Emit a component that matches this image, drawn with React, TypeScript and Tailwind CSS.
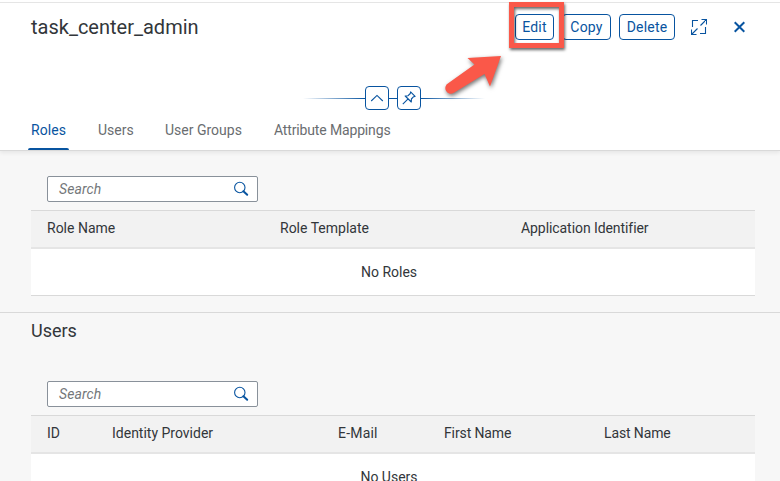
import React from "react";

const tabs = [
  { label: "Roles", cls: "w-[67px] text-[#0854a0] tracking-[0.1px]" },
  { label: "Users", cls: "w-[67px] text-[#6a6d70]" },
  { label: "User Groups", cls: "w-[109px] text-[#6a6d70]" },
  { label: "Attribute Mappings", cls: "w-[140px] text-[#6a6d70] tracking-[-0.15px]" },
];

function ToolButton({ label, cls }: { label: string; cls: string }) {
  return (
    <button
      className={`flex h-[26px] items-center justify-center rounded-[4px] border border-[#0854a0] bg-white text-[14px] leading-none tracking-[0.2px] text-[#0854a0] ${cls}`}
    >
      {label}
    </button>
  );
}

function SearchField() {
  return (
    <div className="ml-4 flex h-[26px] w-[211px] items-center justify-between rounded-[2px] border border-[#89919a] bg-white pr-[8px] pl-[11px]">
      <span className="text-[14px] leading-none tracking-[0.1px] text-[#74777a] italic">Search</span>
      <svg width="16" height="16" viewBox="0 0 16 16" fill="none" stroke="#0854a0">
        <circle cx="6.8" cy="6.5" r="5.2" strokeWidth="1.1" />
        <path d="M10.4 10.2 L14.2 13.8" strokeWidth="2" strokeLinecap="round" />
      </svg>
    </div>
  );
}

type Column = { label: string; cls: string };

function DataTable({ columns, empty }: { columns: Column[]; empty: string }) {
  return (
    <div className="mt-2 h-[86px] w-[724px] border-y border-[#d9d9d9] bg-white">
      <div className="flex h-[38px] items-center border-b-2 border-[#e5e5e5] bg-[#f2f2f2] pb-[2px] pl-4">
        {columns.map((c) => (
          <span key={c.label} className={`shrink-0 whitespace-nowrap ${c.cls}`}>
            {c.label}
          </span>
        ))}
      </div>
      <div className="flex h-[46px] items-center justify-center pr-2">{empty}</div>
    </div>
  );
}

export default function App() {
  return (
    <div className="relative h-[481px] w-[780px] overflow-hidden bg-[#f7f7f7] font-['Roboto',sans-serif] text-[14px] leading-none tracking-[0px] text-[#32363a]">
      <header className="relative h-[151px] border-b border-[#d9d9d9] bg-white pt-[2px] shadow-[0_2px_4px_rgba(0,0,0,0.07)]">
        <div className="flex h-[49px] items-center border-t border-[#e5e5e5] pr-[35px] pl-[31px]">
          <h1 className="flex-1 text-[20px] leading-none tracking-[0px]">task_center_admin</h1>
          <ToolButton label="Edit" cls="mr-2 w-[39px]" />
          <ToolButton label="Copy" cls="mr-2 w-[49px]" />
          <ToolButton label="Delete" cls="mr-4 w-[56px]" />
          <svg className="mr-[27px]" width="16" height="16" viewBox="0 0 16 16" fill="none" stroke="#0854a0" strokeWidth="1.1">
            <path d="M7 1.5H1.5V8M9 14.5H14.5V8M10.5.5H15.5V5.5M15.5.5L9.5 6.5M.5 10.5V15.5H5.5M.5 15.5L6.5 9.5" />
          </svg>
          <svg width="11" height="12" viewBox="0 0 11 12" fill="none" stroke="#0854a0" strokeWidth="2">
            <path d="M.7 1.2L10.3 10.8M10.3 1.2L.7 10.8" />
          </svg>
        </div>
        <div className="mt-[35px] ml-[303px] flex h-6 w-[182px] items-center">
          <div className="h-px w-[62px] bg-gradient-to-r from-transparent to-[#0854a0]" />
          <div className="flex h-6 w-6 items-center justify-center rounded-[4px] border border-[#0854a0]">
            <svg width="14" height="8" viewBox="0 0 14 8" fill="none" stroke="#0854a0" strokeWidth="1.1">
              <path d="M1.2 7L7 1.4L12.8 7" />
            </svg>
          </div>
          <div className="h-px w-2 bg-[#0854a0]" />
          <div className="flex h-6 w-6 items-center justify-center rounded-[4px] border border-[#0854a0]">
            <svg width="14" height="14" viewBox="0 0 14 14" fill="none" stroke="#0854a0" strokeWidth="1.1" strokeLinejoin="round">
              <path d="M8.6.9L13.1 5.4L11.6 5.7L9.4 8L9.3 11L3.2 5L6.1 4.7L8.3 2.5ZM6.1 7.9L.8 13.2" />
            </svg>
          </div>
          <div className="h-px flex-1 bg-gradient-to-r from-[#0854a0] to-transparent" />
        </div>
        <nav className="flex h-10 pl-[31px]">
          {tabs.map((t, i) => (
            <div key={t.label} className={`relative flex h-10 items-center whitespace-nowrap ${t.cls}`}>
              {t.label}
              {i === 0 && <i className="absolute bottom-0 left-[-3px] h-[2px] w-[41px] rounded-t-[2px] bg-[#0854a0]" />}
            </div>
          ))}
        </nav>
      </header>

      <section className="h-[161px] pt-[25px] pl-[31px]">
        <SearchField />
        <DataTable
          columns={[
            { label: "Role Name", cls: "w-[233px]" },
            { label: "Role Template", cls: "w-[241px]" },
            { label: "Application Identifier", cls: "w-[200px] tracking-[-0.07px]" },
          ]}
          empty="No Roles"
        />
      </section>

      <section className="border-t border-[#d9d9d9] pl-[31px]">
        <h2 className="flex h-[68px] pt-[9px] text-[18px] leading-none">Users</h2>
        <SearchField />
        <DataTable
          columns={[
            { label: "ID", cls: "w-[65px]" },
            { label: "Identity Provider", cls: "w-[226px]" },
            { label: "E-Mail", cls: "w-[106px] tracking-[0.2px]" },
            { label: "First Name", cls: "w-[160px] tracking-[-0.12px]" },
            { label: "Last Name", cls: "w-[100px] tracking-[-0.12px]" },
          ]}
          empty="No Users"
        />
      </section>

      <div className="absolute top-[2px] left-[509px] h-[46px] w-[55px] border-x-[5.5px] border-y-[5px] border-[#fa5849] drop-shadow-[1px_2px_1.5px_rgba(0,0,0,0.6)]" />
      <svg
        className="absolute top-[45px] left-[435px] drop-shadow-[1px_2px_2px_rgba(0,0,0,0.55)]"
        width="80"
        height="60"
        viewBox="435 45 80 60"
      >
        <path
          d="M501 56L467.5 58L474.5 64.5L448.2 83.3A5.3 5.3 0 0 0 453.5 93L484.5 74L490 86.5Z"
          fill="#fa5849"
        />
      </svg>
    </div>
  );
}
